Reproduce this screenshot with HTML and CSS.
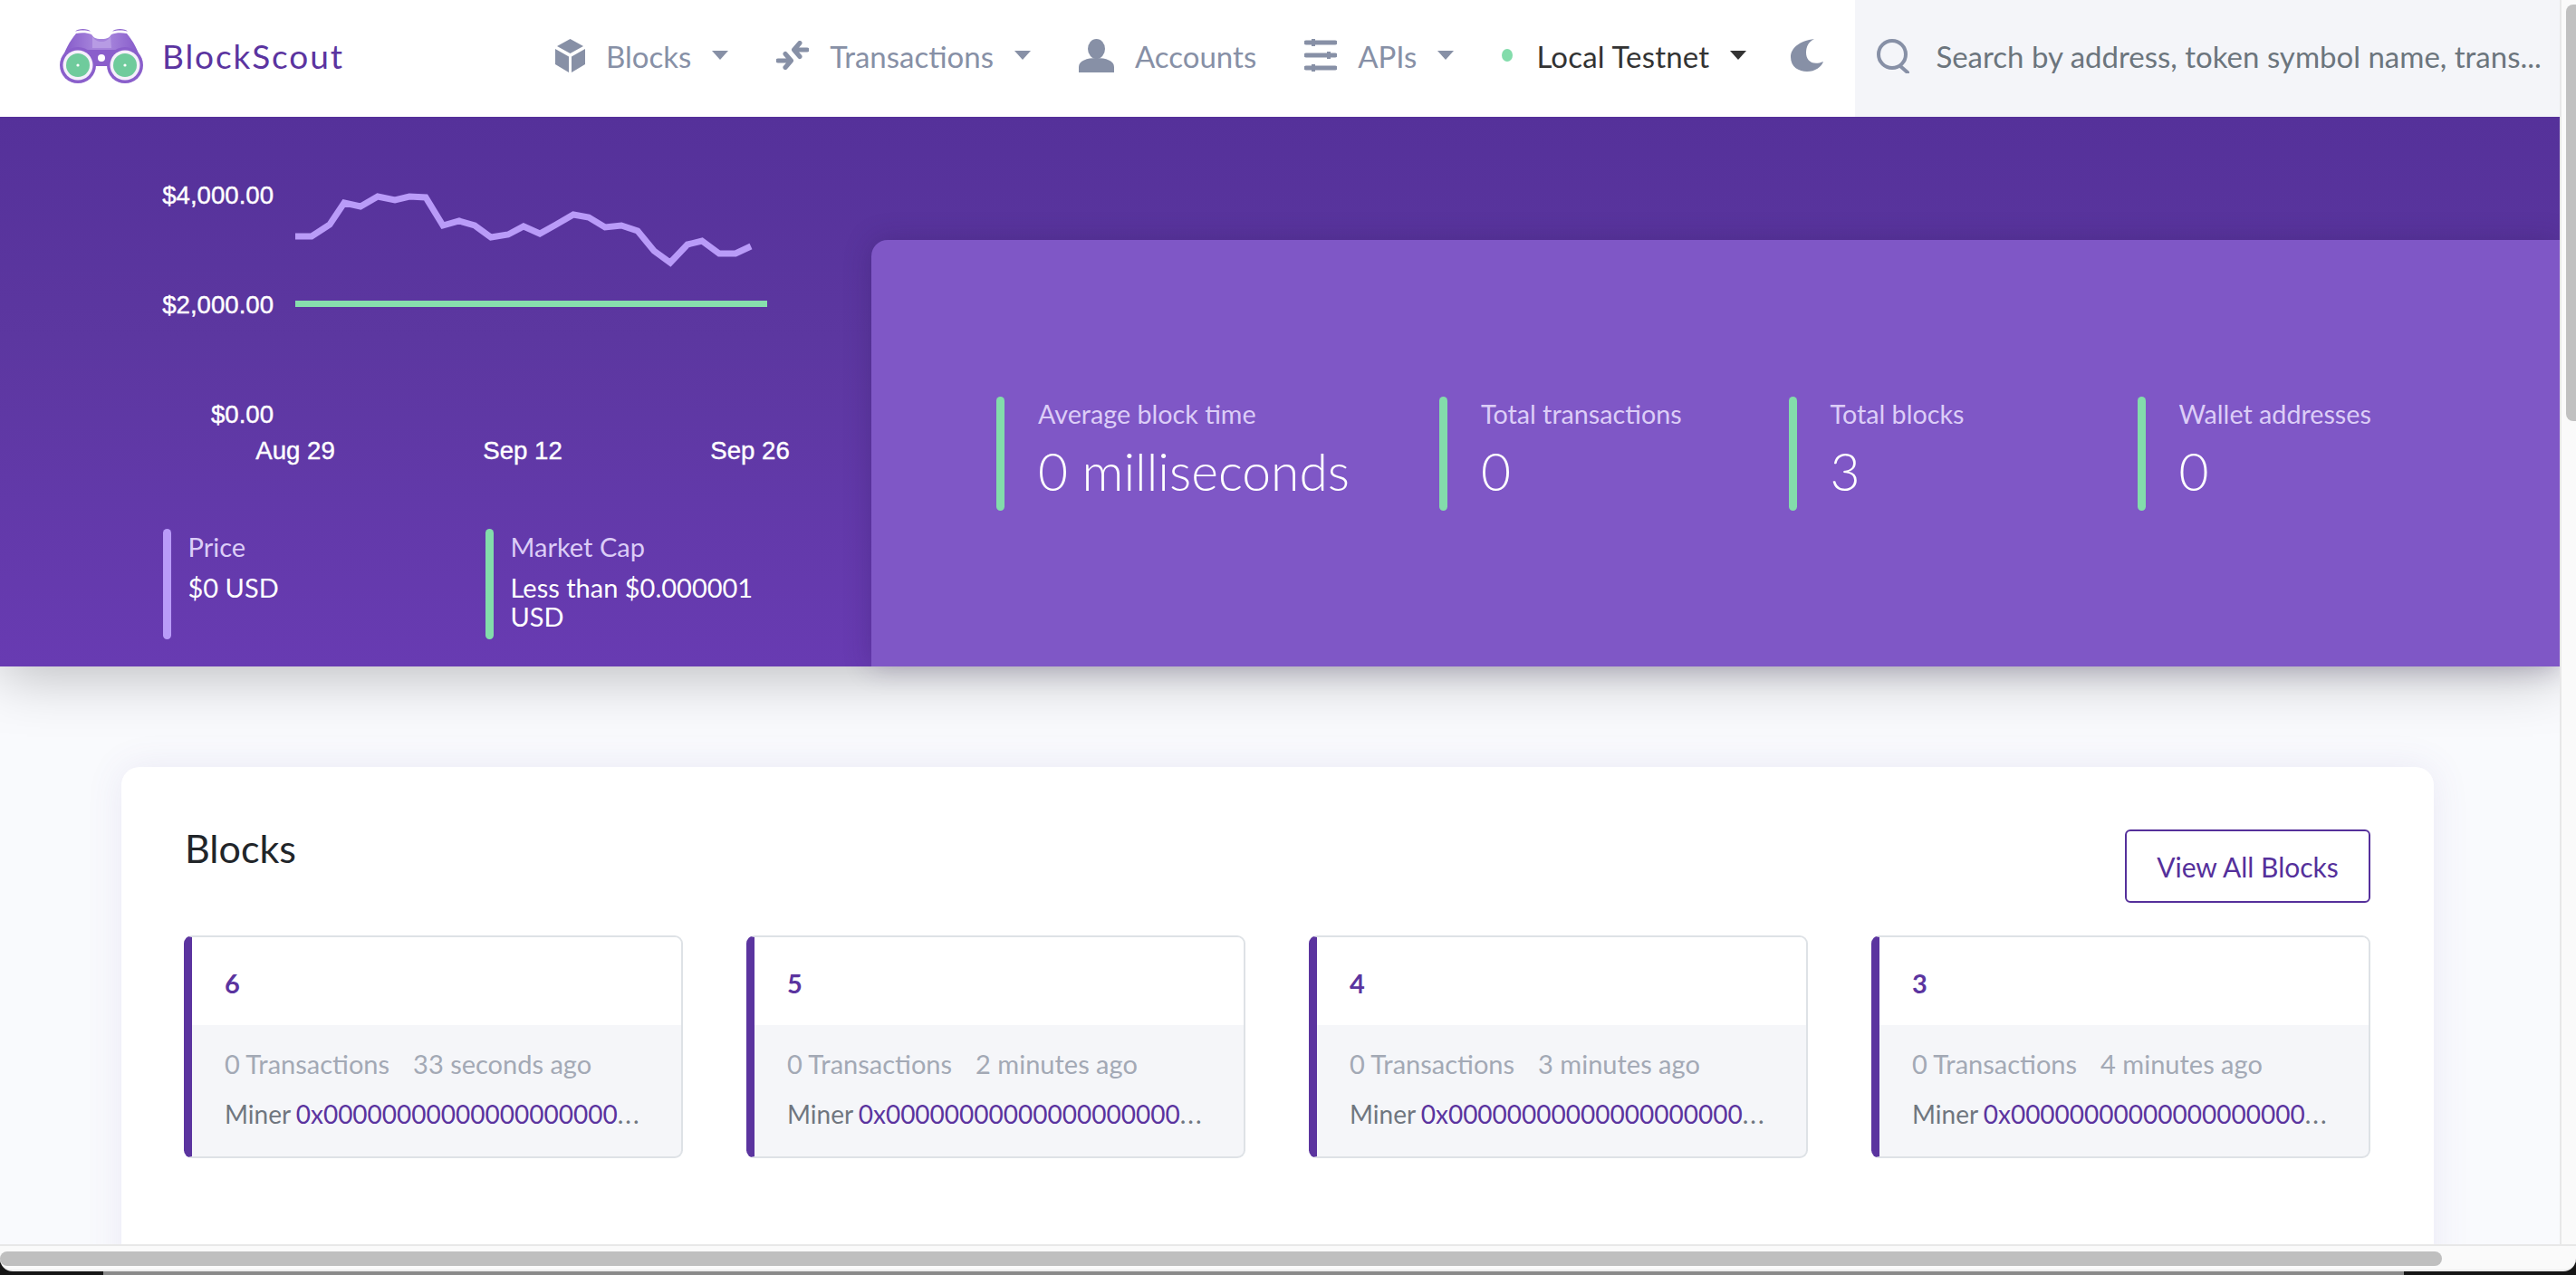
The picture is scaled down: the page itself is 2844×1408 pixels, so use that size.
FILE: index.html
```html
<!DOCTYPE html>
<html lang="en">
<head>
<meta charset="utf-8">
<title>BlockScout</title>
<link rel="stylesheet" href="styles.css">
</head>
<body>
<div class="window">
  <div class="upper">
    <div class="viewport">
      <header class="topbar">
        <a class="logo">
          <svg class="logo-mark" viewBox="0 0 92 62" width="92" height="62">
            <defs><linearGradient id="lg" x1="0" y1="0" x2="1" y2="0"><stop offset="0" stop-color="#8357c8"/><stop offset=".4" stop-color="#a583db"/><stop offset=".6" stop-color="#a583db"/><stop offset="1" stop-color="#8357c8"/></linearGradient></defs>
            <path d="M17 3.500C20 0 31 0 34 3.500C29 2 22 2 17 3.500ZM58 3.500C61 0 72 0 75 3.500C70 2 63 2 58 3.500Z" fill="#9068cf"/>
            <path d="M18 6C24 5 30 5 35 7C37 10 39 12 46 12C53 12 55 10 57 7C62 5 68 5 74 6C81 14 87 26 90 36L2 36C5 26 11 14 18 6Z" fill="url(#lg)"/>
            <path d="M36 9C38 13 42 15 46 15C50 15 54 13 56 9L57 22L36 22Z" fill="#b79be4"/>
            <circle cx="20" cy="41" r="20" fill="#8a5fcb"/>
            <circle cx="72" cy="41" r="20" fill="#8a5fcb"/>
            <rect x="30" y="24" width="32" height="18" fill="#8a5fcb"/>
            <circle cx="20" cy="41" r="16.500" fill="#f5f0fb"/>
            <circle cx="72" cy="41" r="16.500" fill="#f5f0fb"/>
            <circle cx="20" cy="41" r="13" fill="#6fcb9c"/>
            <circle cx="72" cy="41" r="13" fill="#6fcb9c"/>
            <circle cx="20" cy="41" r="1.600" fill="#fff"/>
            <circle cx="72" cy="41" r="1.600" fill="#fff"/>
            <circle cx="46" cy="33" r="4" fill="#fff"/>
          </svg>
          <span class="logo-text">BlockScout</span>
        </a>
        <nav class="nav">
          <a class="nav-item">
            <svg class="ico" viewBox="0 0 33 37" width="33" height="37"><path d="M16.500 0L31 8L16.500 16L2 8ZM0 11L15 19.500V37L0 28ZM33 11L18 19.500V37L33 28Z"/></svg>
            <span class="nav-label">Blocks</span><i class="caret"></i>
          </a>
          <a class="nav-item">
            <svg class="ico" viewBox="0 0 36 32" width="36" height="32"><path class="ico-line" d="M34 10H20M26 2.500L19.500 10L26 17.500M2 22H16M10 14.500L16.500 22L10 29.500"/></svg>
            <span class="nav-label">Transactions</span><i class="caret"></i>
          </a>
          <a class="nav-item">
            <svg class="ico" viewBox="0 0 39 37" width="39" height="37"><ellipse cx="19.500" cy="11" rx="9.500" ry="11"/><path d="M0 37V31C0 24 9 21 19.500 21C30 21 39 24 39 31V37Z"/></svg>
            <span class="nav-label">Accounts</span>
          </a>
          <a class="nav-item">
            <svg class="ico" viewBox="0 0 36 36" width="36" height="36"><path class="ico-bar" d="M2 4H34M2 18H34M2 32H34"/><path class="ico-knob" d="M10 0V8M27 14V22M10 28V36"/></svg>
            <span class="nav-label">APIs</span><i class="caret"></i>
          </a>
          <a class="nav-item net">
            <i class="net-dot"></i>
            <span class="nav-label net-label">Local Testnet</span><i class="caret caret-dark"></i>
          </a>
          <svg class="ico moon" viewBox="0 0 36 36" width="36" height="36"><path d="M26 0C10 2 0 10 0 20C0 31 9 36 18 36C27 36 34 31 36 25C24 30 17 24 17 15C17 8 20 3 26 0Z"/></svg>
        </nav>
        <div class="search">
          <svg class="search-ico" viewBox="0 0 36 38" width="36" height="38"><circle cx="17" cy="17" r="15"/><path d="M26 30L34 37"/></svg>
          <span class="search-text">Search by address, token symbol name, trans...</span>
        </div>
      </header>

      <section class="hero">
        <div class="market">
          <svg class="chart" viewBox="0 0 962 391" width="962" height="391">
            <polyline class="line-price" points="326,132 344,132 364,119 380,95 398,99 417,88 436,92 452,88 470,89 489,120 507,115 524,120 542,133 561,130 578,121 596,129 614,119 633,108 650,111 668,122 686,120 704,126 722,148 740,161 759,141 775,137 794,151 812,151 829,143"/>
            <line class="line-cap" x1="326" y1="206.500" x2="847" y2="206.500"/>
            <text class="axis" x="302" y="96" text-anchor="end">$4,000.00</text>
            <text class="axis" x="302" y="217" text-anchor="end">$2,000.00</text>
            <text class="axis" x="302" y="338" text-anchor="end">$0.00</text>
            <text class="axis" x="326" y="378" text-anchor="middle">Aug 29</text>
            <text class="axis" x="577" y="378" text-anchor="middle">Sep 12</text>
            <text class="axis" x="828" y="378" text-anchor="middle">Sep 26</text>
          </svg>
          <div class="market-stats">
            <div class="mstat">
              <i class="bar bar-violet"></i>
              <div class="mstat-body"><div class="mstat-label">Price</div><div class="mstat-value">$0 USD</div></div>
            </div>
            <div class="mstat">
              <i class="bar bar-green"></i>
              <div class="mstat-body"><div class="mstat-label">Market Cap</div><div class="mstat-value">Less than $0.000001 USD</div></div>
            </div>
          </div>
        </div>
        <div class="panel">
          <div class="panel-grid">
            <div class="stat"><i class="bar bar-green"></i><div><div class="stat-label">Average block time</div><div class="stat-value">0 milliseconds</div></div></div>
            <div class="stat"><i class="bar bar-green"></i><div><div class="stat-label">Total transactions</div><div class="stat-value">0</div></div></div>
            <div class="stat"><i class="bar bar-green"></i><div><div class="stat-label">Total blocks</div><div class="stat-value">3</div></div></div>
            <div class="stat"><i class="bar bar-green"></i><div><div class="stat-label">Wallet addresses</div><div class="stat-value">0</div></div></div>
          </div>
        </div>
      </section>

      <main class="blocks">
        <div class="blocks-head">
          <h2 class="blocks-title">Blocks</h2>
          <a class="btn">View All Blocks</a>
        </div>
        <div class="block-grid">
          <article class="block">
            <div class="block-top"><a class="block-num">6</a></div>
            <div class="block-bot">
              <div class="block-meta"><span>0 Transactions</span><span>33 seconds ago</span></div>
              <div class="block-miner">Miner <a class="hash">0x00000000000000000000</a><span class="dots">...</span></div>
            </div>
          </article>
          <article class="block">
            <div class="block-top"><a class="block-num">5</a></div>
            <div class="block-bot">
              <div class="block-meta"><span>0 Transactions</span><span>2 minutes ago</span></div>
              <div class="block-miner">Miner <a class="hash">0x00000000000000000000</a><span class="dots">...</span></div>
            </div>
          </article>
          <article class="block">
            <div class="block-top"><a class="block-num">4</a></div>
            <div class="block-bot">
              <div class="block-meta"><span>0 Transactions</span><span>3 minutes ago</span></div>
              <div class="block-miner">Miner <a class="hash">0x00000000000000000000</a><span class="dots">...</span></div>
            </div>
          </article>
          <article class="block">
            <div class="block-top"><a class="block-num">3</a></div>
            <div class="block-bot">
              <div class="block-meta"><span>0 Transactions</span><span>4 minutes ago</span></div>
              <div class="block-miner">Miner <a class="hash">0x00000000000000000000</a><span class="dots">...</span></div>
            </div>
          </article>
        </div>
      </main>
    </div>
    <div class="vrail"><div class="vthumb"></div></div>
  </div>
  <div class="lower">
    <div class="hrail"><div class="hthumb"></div></div>
  </div>
</div>
</body>
</html>
```

FILE: styles.css
```css
* { box-sizing: border-box; }
html, body { margin: 0; height: 100%; overflow: hidden; }
body { font-family: "Lato", "Noto Sans", sans-serif; color: #212529; }
i { display: block; }

.window { height: 1408px; display: flex; flex-direction: column; }
.upper { height: 1374px; display: flex; }
.viewport { flex: 1; min-width: 0; overflow: hidden; background: #f9fafd; }

.vrail { width: 18px; background: #fafafa; border-left: 2px solid #e8e8e8; padding: 5px 0 0 5px; }
.vthumb { height: 460px; background: #c1c1c1; border-radius: 8px 0 0 8px; }

.lower { height: 34px; background: linear-gradient(90deg, #161616 0 114px, #8a8a8a 114px 2654px, #161616 2654px); }
.hrail { height: 30px; background: #fafafa; border-top: 2px solid #e8e8e8; border-bottom: 2px solid #ececec; border-radius: 0 0 14px 14px; padding-top: 6px; }
.hthumb { width: 2696px; height: 16px; background: #bfbfbf; border-radius: 8px; }

/* header */
.topbar { height: 129px; display: flex; align-items: stretch; background: #fff; padding-left: 66px; position: relative; z-index: 2; }
.logo { width: 547px; display: flex; align-items: center; gap: 21px; flex: none; }
.logo-mark { display: block; margin-top: -5px; }
.logo-text { font-size: 37px; color: #5b34a0; letter-spacing: 1.9px; margin-top: -6px; }
.nav { display: flex; align-items: center; gap: 53px; flex: none; margin-top: -7px; }
.nav-item { display: flex; align-items: center; gap: 23px; color: #8790a6; }
.ico { display: block; fill: #8790a6; flex: none; }
.ico-line { fill: none; stroke: #8790a6; stroke-width: 5; stroke-linecap: round; stroke-linejoin: round; }
.ico-bar { fill: none; stroke: #8790a6; stroke-width: 5; stroke-linecap: round; }
.ico-knob { fill: none; stroke: #8790a6; stroke-width: 4; }
.nav-label { font-size: 33px; line-height: 40px; white-space: nowrap; margin-top: 2px; }
.caret { width: 0; height: 0; border-left: 9px solid transparent; border-right: 9px solid transparent; border-top: 10px solid #8790a6; flex: none; }
.caret-dark { border-top-color: #333; }
.net { gap: 23px; }
.net-dot { width: 12px; height: 14px; border-radius: 50%; background: #83dcab; margin-right: 3px; }
.net-label { color: #333; letter-spacing: .2px; }
.moon { margin-left: -4px; }
.search { flex: 1; margin-left: 35px; min-width: 0; background: #f4f5f9; display: flex; align-items: center; gap: 29px; padding-left: 24px; }
.search-ico { display: block; fill: none; stroke: #8790a6; stroke-width: 4; stroke-linecap: round; flex: none; margin-top: -5px; }
.search-text { font-size: 33px; color: #6c757d; white-space: nowrap; margin-top: -6px; }

/* hero */
.hero { height: 607px; display: flex; background: linear-gradient(180deg, #55319a 0%, #5c37a0 40%, #683bb2 100%); box-shadow: 0 10px 60px rgba(0, 0, 0, .25); position: relative; }
.market { width: 962px; flex: none; }
.chart { display: block; }
.axis { font-family: "Liberation Sans", Arial, sans-serif; font-size: 27.6px; fill: #fff; stroke: #fff; stroke-width: .4px; }
.line-price { fill: none; stroke: #b99bf8; stroke-width: 7; }
.line-cap { stroke: #87dfad; stroke-width: 7; }
.market-stats { display: grid; grid-template-columns: 356px 356px; padding: 64px 0 0 180px; }
.mstat { display: flex; gap: 18.500px; height: 122px; }
.bar { width: 9px; border-radius: 5px; flex: none; }
.bar-violet { background: #b99bf8; }
.bar-green { background: #83dcab; }
.mstat-body { padding-top: 4px; min-width: 0; width: 300px; }
.mstat-label { font-size: 29px; line-height: 32px; color: #dccdf7; }
.mstat-value { font-size: 29px; line-height: 32px; color: #fff; margin-top: 13px; }

.panel { flex: 1; margin-top: 136px; background: #7f57c6; border-top-left-radius: 18px; box-shadow: 0 0 30px rgba(40, 20, 80, .28); padding: 173px 0 0 138px; }
.panel-grid { display: grid; grid-template-columns: 489px 385.500px 385px 1fr; }
.stat { display: flex; gap: 37px; height: 126px; }
.stat-label { font-size: 28.700px; line-height: 32px; color: #dccdf7; padding-top: 3px; }
.stat-value { font-size: 57px; line-height: 64px; font-weight: 300; color: #fff; margin-top: 15px; white-space: nowrap; }

/* blocks */
.blocks { margin: 111px 139px 0 134px; height: 600px; padding: 69px 70px 0 69px; background: #fff; border-radius: 20px; box-shadow: 0 0 40px rgba(100, 80, 170, .1); position: relative; }
.blocks-head { display: flex; justify-content: space-between; align-items: flex-start; }
.blocks-title { margin: 0 0 0 1px; font-size: 43px; line-height: 42px; font-weight: 400; color: #212529; }
.btn { width: 271px; height: 81px; display: flex; align-items: center; justify-content: center; border: 2px solid #55309b; border-radius: 6px; font-size: 30px; color: #55309b; }
.block-grid { display: grid; grid-template-columns: repeat(4, 1fr); gap: 70px; margin-top: 36px; }
.block { border: 2px solid #dee2e6; border-left: 9px solid #5b349f; border-radius: 9px; overflow: hidden; height: 246px; background: #f5f6f9; }
.block-top { height: 97px; background: #fff; display: flex; align-items: center; padding: 3px 0 0 36px; }
.block-num { font-size: 29px; font-weight: 700; color: #5b349f; }
.block-bot { padding: 26px 10px 0 36px; }
.block-meta { display: flex; gap: 26px; font-size: 29px; line-height: 34px; color: #a3a9b5; }
.block-miner { font-size: 28px; line-height: 34px; color: #70767f; margin-top: 21px; white-space: nowrap; overflow: hidden; }
.hash { color: #5b349f; margin-left: -1px; }
.dots { letter-spacing: 2px; }
```
